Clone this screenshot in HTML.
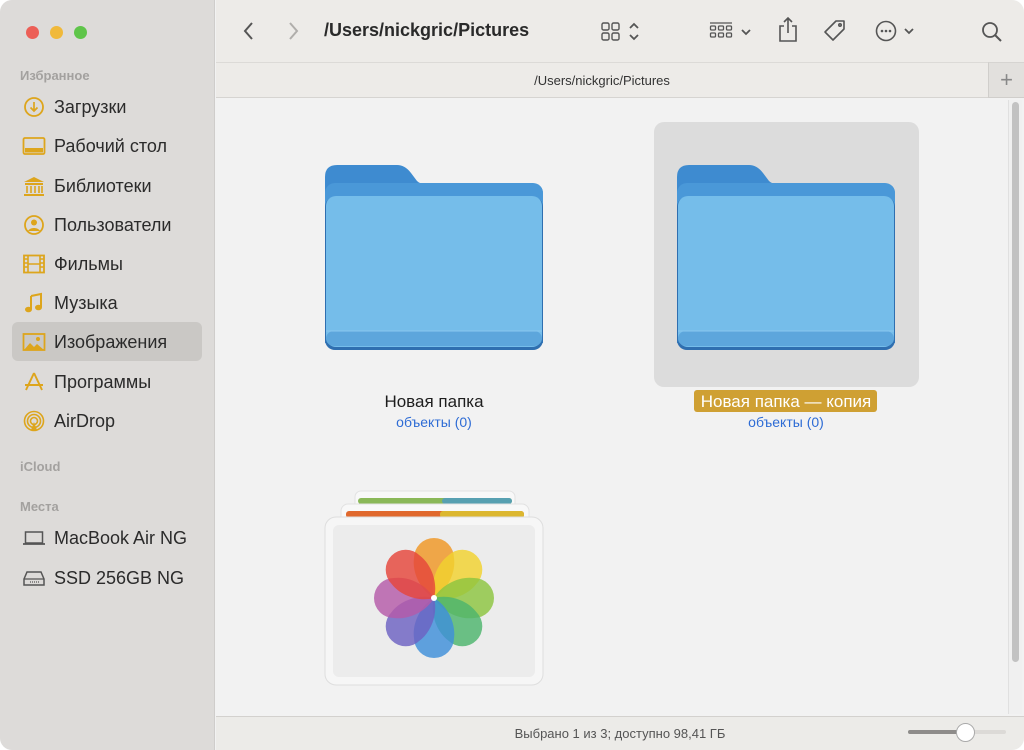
<!DOCTYPE html>
<html><head><meta charset="utf-8"><style>
*{margin:0;padding:0;box-sizing:border-box}
body{width:1024px;height:750px;overflow:hidden;background:#fff;font-family:"Liberation Sans","DejaVu Sans",sans-serif;position:relative}
.win{position:absolute;left:0;top:0;width:1024px;height:750px;border-radius:12px;overflow:hidden;background:#f2f2f2}
.side{position:absolute;left:0;top:0;width:215px;height:750px;background:#dddbd9;border-right:1px solid #cfcdcb}
.tl{position:absolute;top:25.5px;width:13px;height:13px;border-radius:50%}
.hdr{position:absolute;left:20px;font-size:13px;font-weight:bold;color:#a3a19f}
.it{position:absolute;left:54px;font-size:18px;color:#2b2b2b;line-height:20px}
.ic{position:absolute;left:22px;width:24px;height:22px}
.sel{position:absolute;left:12px;top:322px;width:190px;height:39px;background:#cac8c5;border-radius:6px}
.tb{position:absolute;left:216px;top:0;width:808px;height:62px;background:#edebe8}
.pb{position:absolute;left:216px;top:62px;width:772px;height:36px;background:#edebe8;border-top:1px solid #dcdad7;border-bottom:1px solid #d6d4d1;text-align:center;font-size:13px;color:#333;line-height:36px}
.plus{position:absolute;left:988px;top:62px;width:36px;height:36px;background:#e2e0dd;border-top:1px solid #d6d4d1;border-left:1px solid #d0cecb;border-bottom:1px solid #d0cecb;text-align:center;line-height:34px;font-size:22px;color:#888;font-weight:300}
.ct{position:absolute;left:216px;top:98px;width:808px;height:618px;background:#f2f2f2}
.sb{position:absolute;left:216px;top:716px;width:808px;height:34px;background:#ecebe8;border-top:1px solid #d3d1ce;text-align:center;font-size:13px;color:#555;line-height:34px}
.lbl{position:absolute;font-size:17px;color:#1e1e1e;text-align:center}
.sub{position:absolute;font-size:14px;color:#2e6cd5;text-align:center}
</style></head><body><div class="win">
<div class="side">
<div class="tl" style="left:25.5px;background:#ec5f57"></div>
<div class="tl" style="left:49.5px;background:#f0b93a"></div>
<div class="tl" style="left:73.5px;background:#5fc54a"></div>
<div class="hdr" style="top:68px">Избранное</div>
<div class="sel"></div>
<svg class="ic" style="top:96px" viewBox="0 0 24 22"><circle cx="12" cy="11" r="9" fill="none" stroke="#dda51c" stroke-width="1.8"/><path d="M12 6v9M8.5 11.5 12 15l3.5-3.5" fill="none" stroke="#dda51c" stroke-width="1.7"/></svg>
<div class="it" style="top:97px">Загрузки</div>
<svg class="ic" style="top:135px" viewBox="0 0 24 22"><rect x="1.5" y="3" width="21" height="16" rx="1.5" fill="none" stroke="#dda51c" stroke-width="1.8"/><rect x="3" y="13" width="18" height="4.5" fill="#dda51c"/></svg>
<div class="it" style="top:136px">Рабочий стол</div>
<svg class="ic" style="top:175px" viewBox="0 0 24 22"><path d="M12 2 2 7h20z M3 8h18v2H3z M2 19h20v2H2z" fill="#dda51c"/><path d="M5 11v7M9 11v7M13 11v7M17 11v7M20 11v7" stroke="#dda51c" stroke-width="1.6"/></svg>
<div class="it" style="top:176px">Библиотеки</div>
<svg class="ic" style="top:214px" viewBox="0 0 24 22"><circle cx="12" cy="11" r="9" fill="none" stroke="#dda51c" stroke-width="1.8"/><circle cx="12" cy="8.5" r="3" fill="#dda51c"/><path d="M6 17c2-4 10-4 12 0" fill="#dda51c"/></svg>
<div class="it" style="top:215px">Пользователи</div>
<svg class="ic" style="top:253px" viewBox="0 0 24 22"><rect x="2" y="2.5" width="20" height="17" fill="none" stroke="#dda51c" stroke-width="1.8"/><path d="M6 3v16M18 3v16M6 11h12" stroke="#dda51c" stroke-width="1.6"/><path d="M2 6h4M2 10h4M2 14h4M18 6h4M18 10h4M18 14h4" stroke="#dda51c" stroke-width="1.4"/></svg>
<div class="it" style="top:254px">Фильмы</div>
<svg class="ic" style="top:292px" viewBox="0 0 24 22"><path d="M9 4l10-2v13" fill="none" stroke="#dda51c" stroke-width="2"/><path d="M9 4v13" stroke="#dda51c" stroke-width="2"/><ellipse cx="6.5" cy="17.5" rx="3.5" ry="2.8" fill="#dda51c"/><ellipse cx="16.5" cy="15.5" rx="3.5" ry="2.8" fill="#dda51c"/></svg>
<div class="it" style="top:293px">Музыка</div>
<svg class="ic" style="top:331px" viewBox="0 0 24 22"><rect x="1.5" y="3" width="21" height="16" fill="none" stroke="#dda51c" stroke-width="1.8"/><path d="M2 19l6-7 4 4 3-3 7 6z" fill="#dda51c"/><circle cx="16" cy="8" r="2" fill="#dda51c"/></svg>
<div class="it" style="top:332px">Изображения</div>
<svg class="ic" style="top:371px" viewBox="0 0 24 22"><path d="M12 2l-8 17M12 2l8 17M3 14h18" fill="none" stroke="#dda51c" stroke-width="1.9"/></svg>
<div class="it" style="top:372px">Программы</div>
<svg class="ic" style="top:410px" viewBox="0 0 24 22"><g fill="none" stroke="#dda51c" stroke-width="1.6"><circle cx="12" cy="11" r="9.5"/><circle cx="12" cy="11" r="6.5"/><circle cx="12" cy="11" r="3.5"/></g><path d="M9 20l3-8 3 8z" fill="#dda51c"/></svg>
<div class="it" style="top:411px">AirDrop</div>
<div class="hdr" style="top:459px">iCloud</div>
<div class="hdr" style="top:499px">Места</div>
<svg class="ic" style="top:527px" viewBox="0 0 24 22"><rect x="3.5" y="5" width="17" height="11" fill="none" stroke="#555" stroke-width="1.5"/><path d="M1 17h22" stroke="#555" stroke-width="1.8"/></svg>
<div class="it" style="top:528px">MacBook Air NG</div>
<svg class="ic" style="top:567px" viewBox="0 0 24 22"><path d="M5 5h14l3 7v6H2v-6z" fill="none" stroke="#555" stroke-width="1.5"/><path d="M2 12h20" stroke="#555" stroke-width="1.3"/><path d="M8 15h9" stroke="#555" stroke-width="1.2" stroke-dasharray="1 1"/></svg>
<div class="it" style="top:568px">SSD 256GB NG</div>
</div>
<div class="tb">
<svg style="position:absolute;left:25px;top:20px" width="16" height="22" viewBox="0 0 16 22"><path d="M11 3 4 11l7 8" fill="none" stroke="#555" stroke-width="2"/></svg>
<svg style="position:absolute;left:69px;top:20px" width="16" height="22" viewBox="0 0 16 22"><path d="M5 3l7 8-7 8" fill="none" stroke="#b0aeab" stroke-width="2"/></svg>
<div style="position:absolute;left:108px;top:20px;font-size:18px;font-weight:bold;color:#2a2a2a">/Users/nickgric/Pictures</div>
<svg style="position:absolute;left:384px;top:20px" width="50" height="22" viewBox="0 0 50 22"><g fill="none" stroke="#555" stroke-width="1.4"><rect x="2" y="3" width="7" height="7" rx="1.5"/><rect x="12" y="3" width="7" height="7" rx="1.5"/><rect x="2" y="13" width="7" height="7" rx="1.5"/><rect x="12" y="13" width="7" height="7" rx="1.5"/><path d="M30 8l4-4 4 4M30 15l4 4 4-4" stroke-width="1.8"/></g></svg>
<svg style="position:absolute;left:492px;top:20px" width="50" height="22" viewBox="0 0 50 22"><g fill="none" stroke="#555" stroke-width="1.3"><path d="M2 3h22" /><rect x="2.5" y="6" width="5" height="4" rx="1"/><rect x="10.5" y="6" width="5" height="4" rx="1"/><rect x="18.5" y="6" width="5" height="4" rx="1"/><rect x="2.5" y="13" width="5" height="4" rx="1"/><rect x="10.5" y="13" width="5" height="4" rx="1"/><rect x="18.5" y="13" width="5" height="4" rx="1"/><path d="M34 10l4 4 4-4" stroke-width="1.8"/></g></svg>
<svg style="position:absolute;left:561px;top:16px" width="22" height="28" viewBox="0 0 22 28"><g fill="none" stroke="#555" stroke-width="1.6"><path d="M7 10H3v15h16V10h-4"/><path d="M11 2v15M7 6l4-4 4 4"/></g></svg>
<svg style="position:absolute;left:606px;top:18px" width="26" height="26" viewBox="0 0 26 26"><g fill="none" stroke="#555" stroke-width="1.6"><path d="M14 3h8v8L11 22 3 14z" stroke-linejoin="round"/><circle cx="18" cy="7" r="1.2"/></g></svg>
<svg style="position:absolute;left:658px;top:19px" width="44" height="24" viewBox="0 0 44 24"><circle cx="12" cy="12" r="9.5" fill="none" stroke="#555" stroke-width="1.6"/><circle cx="8" cy="12" r="1.3" fill="#555"/><circle cx="12" cy="12" r="1.3" fill="#555"/><circle cx="16" cy="12" r="1.3" fill="#555"/><path d="M31 10l4 4 4-4" fill="none" stroke="#555" stroke-width="1.8"/></svg>
<svg style="position:absolute;left:764px;top:20px" width="24" height="24" viewBox="0 0 24 24"><circle cx="10" cy="10" r="7" fill="none" stroke="#555" stroke-width="1.8"/><path d="M15 15l6 6" stroke="#555" stroke-width="2"/></svg>
</div>
<div class="pb">/Users/nickgric/Pictures</div>
<div class="plus">+</div>
<div class="ct">
<div style="position:absolute;left:792px;top:2px;width:14px;height:614px;background:#f0f0f0;border-left:1px solid #e0e0e0"></div>
<div style="position:absolute;left:796px;top:4px;width:7px;height:560px;background:#c2c2c2;border-radius:4px"></div>
<div style="position:absolute;left:438px;top:24px;width:265px;height:265px;background:#dcdcdc;border-radius:10px"></div>
</div>
<svg style="position:absolute;left:0;top:0" width="1024" height="750">
<defs>
<g id="fold">
<path d="M0 14Q0 2 12 2H72q8 0 14 8l6 8q3 3 9 3H208q10 0 10 10V180H0z" fill="#3e8bd0"/>
<rect x="0" y="20" width="218" height="40" rx="10" fill="#4a98d8"/>
<rect x="0" y="34" width="218" height="153" rx="10" fill="#2f6fb0"/>
<rect x="1" y="33" width="216" height="151" rx="10" fill="#75bdea"/>
<rect x="1" y="168" width="216" height="15" rx="8" fill="#5da6dc"/>
<path d="M1 168h216" stroke="#8cc8ef" stroke-width="1"/>
</g>
<path id="pet" d="M0 0C-14 -8 -22 -26 -20 -40A20 20 0 0 1 20 -40C22 -26 14 -8 0 0z"/>
</defs>
<use href="#fold" x="325" y="163"/>
<use href="#fold" x="677" y="163"/>
<rect x="355" y="491" width="160" height="30" rx="6" fill="#f8f8f8" stroke="#e2e2e2"/>
<rect x="358" y="498" width="154" height="6" rx="3" fill="#8ab858"/>
<rect x="442" y="498" width="70" height="6" rx="3" fill="#4a9ac8" opacity=".8"/>
<rect x="341" y="504" width="188" height="30" rx="7" fill="#f8f8f8" stroke="#e2e2e2"/>
<rect x="346" y="511" width="178" height="7" rx="3" fill="#e0682c"/>
<rect x="440" y="511" width="84" height="7" rx="3" fill="#dcc030" opacity=".9"/>
<rect x="325" y="517" width="218" height="168" rx="11" fill="#f6f6f6" stroke="#dedede"/>
<rect x="333" y="525" width="202" height="152" rx="6" fill="#ececec"/>
<g transform="translate(434,598)">
<use href="#pet" fill="#f09a2c" opacity=".85" transform="rotate(0)"/>
<use href="#pet" fill="#f2d22e" opacity=".82" transform="rotate(45)"/>
<use href="#pet" fill="#8cc540" opacity=".82" transform="rotate(90)"/>
<use href="#pet" fill="#4db56c" opacity=".82" transform="rotate(135)"/>
<use href="#pet" fill="#3e8fd9" opacity=".82" transform="rotate(180)"/>
<use href="#pet" fill="#6c62c2" opacity=".82" transform="rotate(225)"/>
<use href="#pet" fill="#b45aa8" opacity=".82" transform="rotate(270)"/>
<use href="#pet" fill="#e5463a" opacity=".82" transform="rotate(315)"/>
</g>
<circle cx="434" cy="598" r="3" fill="#fff"/>
</svg>
<div class="lbl" style="left:334px;top:392px;width:200px">Новая папка</div>
<div class="sub" style="left:334px;top:414px;width:200px">объекты (0)</div>
<div style="position:absolute;left:694px;top:390px;width:183px;height:22px;background:#cfa033;border-radius:3px"></div>
<div class="lbl" style="left:666px;top:392px;width:240px;color:#fff">Новая папка — копия</div>
<div class="sub" style="left:686px;top:414px;width:200px">объекты (0)</div>
<div class="sb">Выбрано 1 из 3; доступно 98,41 ГБ</div>
<div style="position:absolute;left:908px;top:730px;width:98px;height:4px;background:#dcdad7;border-radius:2px"></div>
<div style="position:absolute;left:908px;top:730px;width:56px;height:4px;background:#8e8c8a;border-radius:2px"></div>
<div style="position:absolute;left:956px;top:723px;width:19px;height:19px;border-radius:50%;background:#fff;border:1px solid #aaa"></div>
</div></body></html>
